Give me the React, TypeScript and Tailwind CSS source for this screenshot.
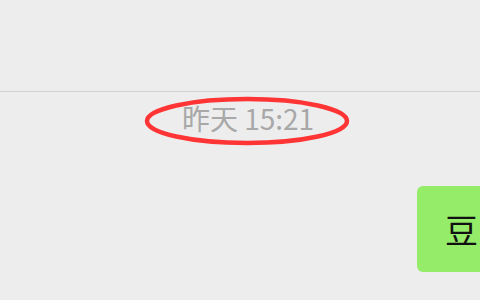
export default function App() {
  return (
    <div className="relative w-[480px] h-[300px] overflow-hidden bg-[#ededed]" style={{ fontFamily: '"Noto Sans CJK SC", "Noto Sans", sans-serif' }}>
      <div className="h-[92px] border-b border-[#d2d2d2]" />
      <div className="relative flex justify-center pl-[16px] pt-[9px] h-[48px]">
        <span className="text-[28px] leading-[35px] text-[#a8a8a8]">昨天 15:21</span>
        <svg className="absolute left-[143px] top-[4px]" width="208" height="52" viewBox="0 0 208 52">
          <ellipse cx="104" cy="25" rx="100" ry="22" fill="none" stroke="#ff3434" strokeWidth="4.5" />
        </svg>
      </div>
      <div className="flex justify-end pt-[46px]">
        <div className="w-[70px] h-[86px] mr-[-7px] rounded-[6px] bg-[#95ec69] flex items-center pl-[28px]">
          <span className="text-[33px] leading-none text-[#111] whitespace-nowrap">豆</span>
        </div>
      </div>
    </div>
  );
}
